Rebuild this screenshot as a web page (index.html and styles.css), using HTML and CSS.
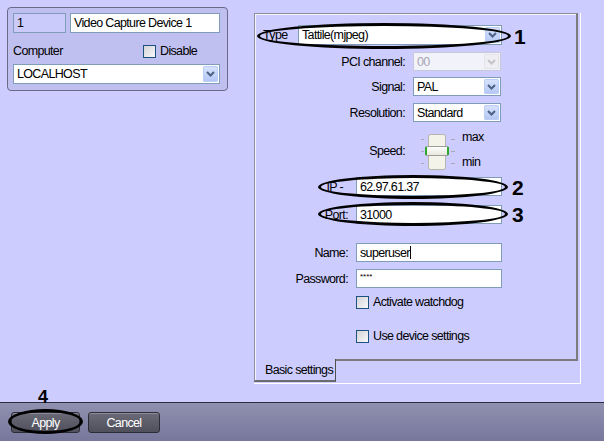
FILE: index.html
```html
<!DOCTYPE html>
<html>
<head>
<meta charset="utf-8">
<title>Video Capture Device</title>
<link rel="stylesheet" href="styles.css">
</head>
<body>
<div class="screen">
  <div class="content">
    <div class="devpanel">
      <div class="row1">
        <div class="field idfield">1</div>
        <div class="field namefield">Video Capture Device 1</div>
      </div>
      <div class="row2">
        <span class="complabel">Computer</span>
        <span class="cb"></span><span class="cbtext">Disable</span>
      </div>
      <div class="combo hostcombo">
        <span class="val">LOCALHOST</span>
        <span class="arrow"><svg width="9" height="6" viewBox="0 0 9 6"><polyline points="1,1 4.5,4.5 8,1" fill="none" stroke="#4d6185" stroke-width="2"/></svg></span>
      </div>
    </div>

    <div class="tabctl">
      <div class="pane">
        <div class="typerow">
          <span class="typelabel">Type</span>
          <div class="combo typecombo">
            <span class="val">Tattile(mjpeg)</span>
            <span class="arrow"><svg width="9" height="6" viewBox="0 0 9 6"><polyline points="1,1 4.5,4.5 8,1" fill="none" stroke="#4d6185" stroke-width="2"/></svg></span>
          </div>
        </div>
        <div class="frow r-pci">
          <span class="flabel">PCI channel:</span>
          <div class="combo small disabled">
            <span class="val">00</span>
            <span class="arrow"><svg width="9" height="6" viewBox="0 0 9 6"><polyline points="1,1 4.5,4.5 8,1" fill="none" stroke="#c4c4c8" stroke-width="2"/></svg></span>
          </div>
        </div>
        <div class="frow r-signal">
          <span class="flabel">Signal:</span>
          <div class="combo small">
            <span class="val">PAL</span>
            <span class="arrow"><svg width="9" height="6" viewBox="0 0 9 6"><polyline points="1,1 4.5,4.5 8,1" fill="none" stroke="#4d6185" stroke-width="2"/></svg></span>
          </div>
        </div>
        <div class="frow r-res">
          <span class="flabel">Resolution:</span>
          <div class="combo small">
            <span class="val">Standard</span>
            <span class="arrow"><svg width="9" height="6" viewBox="0 0 9 6"><polyline points="1,1 4.5,4.5 8,1" fill="none" stroke="#4d6185" stroke-width="2"/></svg></span>
          </div>
        </div>
        <div class="frow r-speed">
          <span class="flabel">Speed:</span>
          <svg class="slider" width="42" height="42" viewBox="0 0 42 42">
            <defs>
              <linearGradient id="thumbg" x1="0" y1="0" x2="0" y2="1">
                <stop offset="0" stop-color="#ffffff"/>
                <stop offset="1" stop-color="#e6e6dc"/>
              </linearGradient>
            </defs>
            <g stroke="#a8a8b0" stroke-width="1">
              <line x1="4" y1="9.5" x2="7" y2="9.5"/>
              <line x1="4" y1="21.5" x2="7" y2="21.5"/>
              <line x1="4" y1="33.5" x2="7" y2="33.5"/>
              <line x1="34" y1="9.5" x2="38" y2="9.5"/>
              <line x1="34" y1="21.5" x2="38" y2="21.5"/>
              <line x1="34" y1="33.5" x2="38" y2="33.5"/>
            </g>
            <rect x="11.5" y="4.5" width="17" height="35" rx="2" fill="#f4f3ea" stroke="#b4b4ac"/>
            <rect x="8.5" y="16.5" width="23" height="9" rx="1.5" fill="url(#thumbg)" stroke="#9c9c98"/>
            <rect x="8" y="17" width="2" height="8" fill="#2fa82f"/>
            <rect x="30" y="17" width="2" height="8" fill="#2fa82f"/>
          </svg>
          <div class="minmax"><span>max</span><span>min</span></div>
        </div>
        <div class="irow r-ip">
          <span class="ilabel iplabel">IP -</span>
          <div class="input">62.97.61.37</div>
        </div>
        <div class="irow r-port">
          <span class="ilabel">Port:</span>
          <div class="input">31000</div>
        </div>
        <div class="irow r-name">
          <span class="ilabel">Name:</span>
          <div class="input">superuser<span class="caret"></span></div>
        </div>
        <div class="irow r-pass">
          <span class="ilabel">Password:</span>
          <div class="input pass"><span class="stars">****</span></div>
        </div>
        <div class="crow r-watch">
          <span class="cb"></span><span class="cbtext">Activate watchdog</span>
        </div>
        <div class="crow r-use">
          <span class="cb"></span><span class="cbtext">Use device settings</span>
        </div>
      </div>
      <div class="tabs">
        <div class="tab">Basic settings</div>
      </div>
    </div>
  </div>

  <div class="bottombar">
    <div class="btn btn-apply">Apply</div>
    <div class="btn btn-cancel">Cancel</div>
  </div>

  <div class="ell ell-type"></div>
  <div class="ell ell-ip"></div>
  <div class="ell ell-port"></div>
  <div class="ell ell-apply"></div>
  <div class="num num-1">1</div>
  <div class="num num-2">2</div>
  <div class="num num-3">3</div>
  <div class="num num-4">4</div>
</div>
</body>
</html>
```
FILE: styles.css
```css
* { box-sizing: border-box; }

body {
  margin: 0;
  background: #ccccff;
  font-family: "Liberation Sans", Arial, sans-serif;
  font-size: 12.5px;
  letter-spacing: -0.65px;
  color: #000;
}

.screen {
  position: relative;
  width: 604px;
  height: 441px;
  overflow: hidden;
  display: flex;
  flex-direction: column;
}

.content {
  height: 402px;
  display: flex;
  align-items: flex-start;
  flex: none;
}

/* left device panel */
.devpanel {
  margin: 7px 0 0 7px;
  width: 221px;
  height: 84px;
  background: #bfbff0;
  border: 1px solid #6a6a88;
  border-radius: 4px;
  padding: 5px 7px 0 5px;
}

.row1 { display: flex; gap: 4px; height: 20px; }

.field {
  border: 1px solid #7f9db9;
  height: 20px;
  display: flex;
  align-items: center;
  padding-left: 3px;
  white-space: nowrap;
}
.idfield { width: 53px; background: #cbcbfb; }
.namefield { width: 150px; background: #fff; }

.row2 { margin-top: 10px; height: 16px; display: flex; align-items: center; }
.complabel { width: 130px; }

.cb {
  flex: none;
  width: 13px;
  height: 13px;
  border: 1px solid #1c5180;
  background: linear-gradient(135deg, #d4d4d8, #f8f8fa);
}
.cbtext { margin-left: 4px; white-space: nowrap; }

/* combo boxes */
.combo {
  display: flex;
  align-items: stretch;
  border: 1px solid #7f9db9;
  background: #fff;
  padding: 1px;
}
.combo .val {
  flex: 1;
  display: flex;
  align-items: center;
  padding-left: 2px;
  white-space: nowrap;
}
.arrow {
  flex: none;
  width: 15px;
  display: flex;
  align-items: center;
  justify-content: center;
  background: linear-gradient(#d8e3fc, #b3c7f6);
  border-radius: 2px;
  box-shadow: inset 0 0 0 1px #bccdf6;
}
.hostcombo { margin-top: 5px; width: 207px; height: 20px; }
.typecombo { width: 204px; height: 20px; }
.small { width: 88px; height: 19px; }
.disabled { border-color: #c9c9d6; background: #f2f2fa; }
.disabled .val { color: #a6a6b4; }
.disabled .arrow { background: #efeff3; box-shadow: inset 0 0 0 1px #e2e2ea; }

/* tab control */
.tabctl {
  margin: 13px 0 0 26px;
  width: 327px;
  height: 371px;
  border-right: 1px solid #fff;
  border-bottom: 1px solid #fff;
}
.pane {
  width: 324px;
  height: 348px;
  border-top: 1px solid #8e8e9c;
  border-left: 1px solid #8e8e9c;
  border-right: 2px solid #7c7c7c;
  border-bottom: 2px solid #7c7c7c;
  box-shadow: inset 1px 1px 0 #f4f4ff;
  padding: 11px 0 0 8px;
}
.tabs { display: flex; }
.tab {
  margin-top: -2px;
  width: 82px;
  height: 23px;
  background: #ccccff;
  border-left: 1px solid #8e8e9c;
  border-right: 1px solid #505050;
  border-bottom: 2px solid #6c6c6c;
  box-shadow: inset 1px 0 0 #f4f4ff;
  padding: 4px 0 0 10px;
  white-space: nowrap;
}

.typerow { display: flex; height: 20px; align-items: center; }
.typelabel { width: 35px; }

.frow { display: flex; align-items: center; }
.flabel { width: 142px; text-align: right; margin-right: 8px; white-space: nowrap; }
.r-pci { margin-top: 7px; }
.r-signal { margin-top: 6px; }
.r-res { margin-top: 7px; }
.r-speed { margin-top: 8px; height: 42px; }
.slider { margin-left: 4px; flex: none; }
.minmax {
  margin-left: 3px;
  height: 42px;
  display: flex;
  flex-direction: column;
  justify-content: space-between;
  line-height: 14px;
  padding-bottom: 3px;
}

.irow { display: flex; align-items: center; }
.ilabel { width: 85px; text-align: right; margin-right: 8px; white-space: nowrap; }
.iplabel { padding-right: 5px; }
.input {
  width: 146px;
  height: 19px;
  border: 1px solid #7f9db9;
  background: #fff;
  display: flex;
  align-items: center;
  padding-left: 3px;
  white-space: nowrap;
}
.caret { width: 1px; height: 13px; background: #000; }
.pass { align-items: flex-start; }
.stars { font-size: 8px; line-height: 8px; padding-top: 3px; letter-spacing: 0; }
.r-ip { margin-top: 5px; }
.r-port { margin-top: 9px; }
.r-name { margin-top: 19px; }
.r-pass { margin-top: 7px; }

.crow { display: flex; align-items: center; margin-left: 93px; height: 14px; }
.r-watch { margin-top: 7px; }
.r-use { margin-top: 20px; }

/* bottom bar */
.bottombar {
  flex: 1;
  border-top: 1px solid #2d2d42;
  background: linear-gradient(#9090af, #77779c);
  display: flex;
  align-items: flex-start;
  padding: 9px 0 0 11px;
  gap: 8px;
}
.btn {
  height: 21px;
  border: 1px solid #2c2c36;
  border-radius: 3px;
  background: linear-gradient(#6a6a78, #50505c);
  box-shadow: inset 0 1px 0 #8a8a98;
  color: #fff;
  display: flex;
  align-items: center;
  justify-content: center;
}
.btn-apply { width: 69px; }
.btn-cancel { width: 72px; }

/* annotations */
.ell {
  position: absolute;
  border: 3px solid #000;
  border-radius: 50%;
}
.ell-type { left: 257px; top: 23px; width: 254px; height: 26px; }
.ell-ip { left: 318px; top: 175px; width: 190px; height: 24px; }
.ell-port { left: 318px; top: 202px; width: 190px; height: 24px; }
.ell-apply { left: 8px; top: 409px; width: 75px; height: 25px; }

.num {
  position: absolute;
  font-family: "Liberation Sans", Arial, sans-serif;
  font-weight: bold;
  font-size: 21px;
  line-height: 21px;
  letter-spacing: 0;
}
.num-1 { left: 514px; top: 26px; }
.num-2 { left: 512px; top: 177px; }
.num-3 { left: 512px; top: 204px; }
.num-4 { left: 38px; top: 387px; font-size: 18px; }
```
